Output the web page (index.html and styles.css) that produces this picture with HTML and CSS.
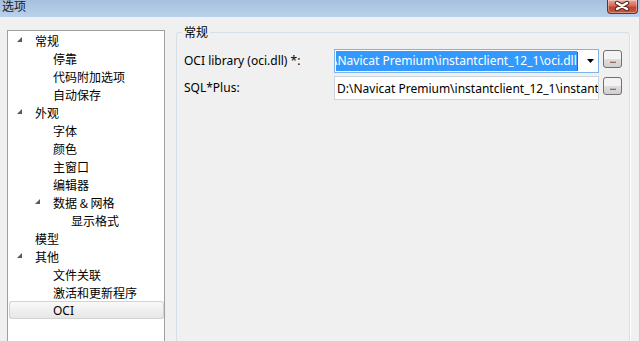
FILE: index.html
```html
<!DOCTYPE html>
<html lang="zh-CN">
<head>
    <meta charset="UTF-8">
    <title>选项</title>
    <link rel="stylesheet" href="styles.css">
</head>
<body>
    <div class="window">
        <div class="titlebar">
            <span class="title">选项</span>
            <span class="close">
                <svg width="29" height="12" viewBox="0 0 29 12">
                    <path d="M9 3 L19 9 M19 3 L9 9" stroke="#5b2b24" stroke-width="4.4" stroke-linecap="round"/>
                    <path d="M9 3 L19 9 M19 3 L9 9" stroke="#fff" stroke-width="2.4" stroke-linecap="round"/>
                </svg>
            </span>
        </div>
        <div class="body">
            <div class="tree">
                <div class="node l0"><span class="tw"><svg width="6" height="6"><polygon points="5,0 5,5 0,5"/></svg></span>常规</div>
                <div class="node l1"><span class="tw"></span>停靠</div>
                <div class="node l1"><span class="tw"></span>代码附加选项</div>
                <div class="node l1"><span class="tw"></span>自动保存</div>
                <div class="node l0"><span class="tw"><svg width="6" height="6"><polygon points="5,0 5,5 0,5"/></svg></span>外观</div>
                <div class="node l1"><span class="tw"></span>字体</div>
                <div class="node l1"><span class="tw"></span>颜色</div>
                <div class="node l1"><span class="tw"></span>主窗口</div>
                <div class="node l1"><span class="tw"></span>编辑器</div>
                <div class="node l1"><span class="tw"><svg width="6" height="6"><polygon points="5,0 5,5 0,5"/></svg></span>数据 &amp; 网格</div>
                <div class="node l2"><span class="tw"></span>显示格式</div>
                <div class="node l0"><span class="tw"></span>模型</div>
                <div class="node l0"><span class="tw"><svg width="6" height="6"><polygon points="5,0 5,5 0,5"/></svg></span>其他</div>
                <div class="node l1"><span class="tw"></span>文件关联</div>
                <div class="node l1"><span class="tw"></span>激活和更新程序</div>
                <div class="node l1 selected"><span class="tw"></span>OCI</div>
            </div>

            <fieldset class="group">
                <legend>常规</legend>
                <div class="field">
                    <label>OCI library (oci.dll) *:</label>
                    <div class="combo">
                        <span class="sel"><span>\Navicat Premium\instantclient_12_1\oci.dll</span></span>
                        <span class="caret"></span>
                        <svg class="drop" width="7" height="4"><polygon points="0,0 7,0 3.5,4"/></svg>
                    </div>
                    <button class="dots">...</button>
                </div>
                <div class="field">
                    <label>SQL*Plus:</label>
                    <div class="input">D:\Navicat Premium\instantclient_12_1\instantclient_12_1\sqlplus.exe</div>
                    <button class="dots">...</button>
                </div>
            </fieldset>
        </div>
    </div>
</body>
</html>
```

FILE: styles.css
```css
* {
    box-sizing: border-box;
}
body {
    margin: 0;
    font: 12px "Segoe UI", "Noto Sans", "Noto Sans CJK SC", sans-serif;
    color: #000;
}
.window {
    width: 640px;
    height: 341px;
    overflow: hidden;
    background: #f0f0f0;
}

/* 제목줄 */
.titlebar {
    height: 17px;
    display: flex;
    justify-content: space-between;
    align-items: flex-start;
    background: linear-gradient(#a6c0de, #b9d1ea);
}
.title {
    font-family: "Noto Sans CJK SC", sans-serif;
    line-height: 14px;
    margin-top: -1px;
    padding-left: 2px;
    color: #1c1c1c;
}
.close {
    width: 31px;
    height: 14px;
    margin-right: 2px;
    border: 1px solid #6e2e25;
    border-top: none;
    border-radius: 0 0 4px 4px;
    background: linear-gradient(#e7a898, #d26a55 45%, #c3432d 55%, #c9553c);
    box-shadow: inset 0 0 0 1px rgba(255, 255, 255, .35);
}
.close svg {
    display: block;
}

.body {
    display: flex;
    align-items: flex-start;
    height: 324px;
    border-right: 1px solid #b9d1ea;
}

/* 왼쪽 트리 */
.tree {
    margin: 13px 0 0 7px;
    width: 158px;
    height: 340px;
    flex: none;
    background: #fff;
    border: 1px solid #a0a0a0;
    padding: 0;
    font-family: "Noto Sans CJK SC", sans-serif;
}
.node {
    height: 18px;
    margin-left: 1px;
    display: flex;
    align-items: center;
    white-space: nowrap;
}
.node.l0 { padding-left: 8px; }
.node.l1 { padding-left: 26px; }
.node.l2 { padding-left: 44px; }
.node.selected {
    background: linear-gradient(#fafafa, #e5e5e5);
    box-shadow: inset 0 0 0 1px #d3d3d3;
    border-radius: 3px;
    font-family: "Segoe UI", "Noto Sans", sans-serif;
}
.tw {
    width: 18px;
    height: 18px;
    flex: none;
    padding-top: 6px;
}
.tw svg {
    display: block;
    fill: #595959;
}

/* 오른쪽 그룹 */
.group {
    margin: 8px 0 0 11px;
    width: 454px;
    height: 360px;
    flex: none;
    border: 1px solid #d5dfe5;
    border-radius: 3px;
    padding: 10px 7px 0 7px;
    box-shadow: 1px 1px 0 #fff;
}
.group legend {
    font-family: "Noto Sans CJK SC", sans-serif;
    line-height: 14px;
    padding: 0 2px;
    margin-left: -2px;
}
.field {
    display: flex;
    align-items: flex-start;
    height: 24px;
}
.field + .field {
    margin-top: 3px;
}
.field label {
    width: 150px;
    flex: none;
    line-height: 24px;
}
.combo, .input {
    width: 265px;
    height: 24px;
    flex: none;
    display: flex;
    align-items: center;
    background: #fff;
    overflow: hidden;
    white-space: nowrap;
}
.combo {
    border: 1px solid #7eb4ea;
    padding: 0 1px;
}
.sel {
    height: 20px;
    line-height: 20px;
    overflow: hidden;
    background: #3399ff;
    color: #fff;
}
.sel span {
    display: inline-block;
    margin-left: -3px;
}
.caret {
    width: 1px;
    height: 19px;
    background: #7a5a1e;
}
.drop {
    margin-left: auto;
    margin-right: 3px;
}
.input {
    border: 1px solid #cdd3db;
    padding: 0 2px;
}
.dots {
    margin: 1px 0 0 4px;
    width: 19px;
    height: 18px;
    flex: none;
    padding: 0;
    overflow: hidden;
    border: 1px solid #707070;
    border-radius: 3px;
    background: linear-gradient(#f3f3f3 50%, #dedede 50%, #d0d0d0);
    font: 11px "Noto Sans", sans-serif;
    line-height: 16px;
    letter-spacing: -1px;
    color: #3a2a4a;
}
```
